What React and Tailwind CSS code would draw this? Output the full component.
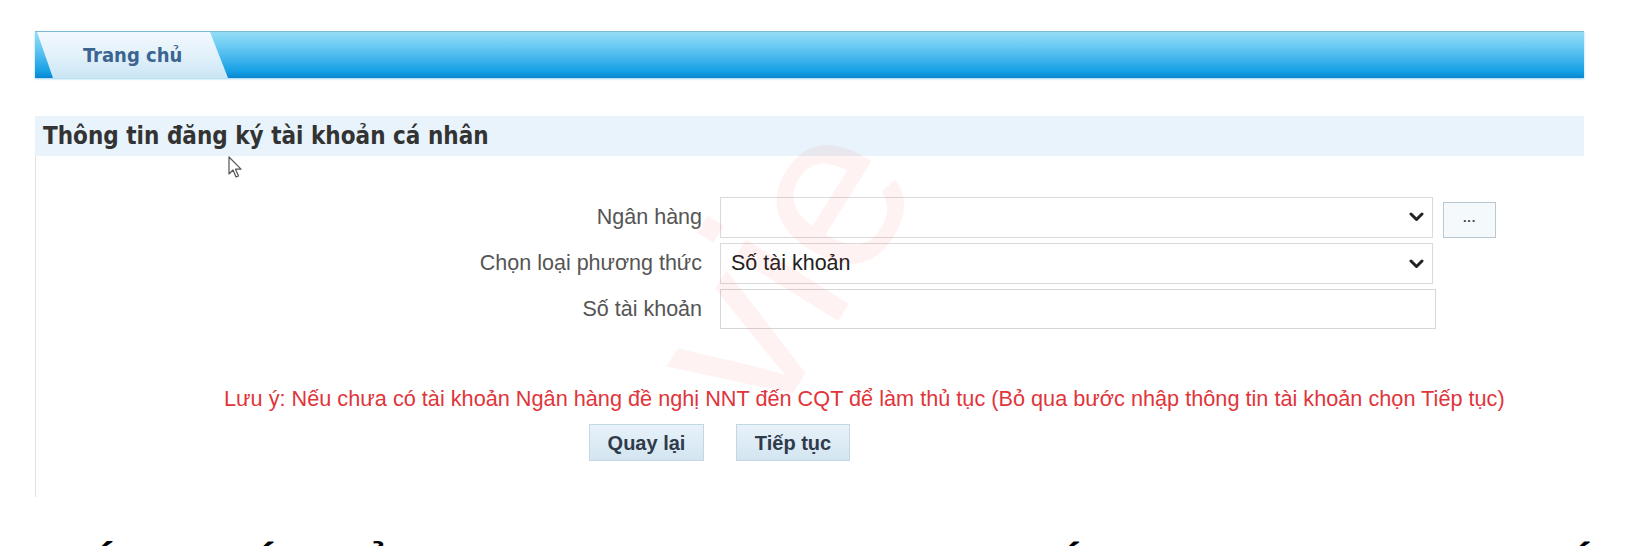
import React from "react";

function Chevron() {
  return (
    <svg width="15" height="10" viewBox="0 0 15 10" className="shrink-0">
      <polyline points="2,2 7.5,7.5 13,2" fill="none" stroke="#222" strokeWidth="3" strokeLinecap="round" strokeLinejoin="round" />
    </svg>
  );
}

function Cursor() {
  return (
    <svg width="15" height="23" viewBox="0 0 15 23" className="absolute left-[228px] top-[156px]">
      <path d="M1 1 L1 18 L5 14 L8 21 L10.5 20 L7.5 13.2 L13 13.2 Z" fill="#fff" stroke="#555" strokeWidth="1.2" strokeLinejoin="round" />
    </svg>
  );
}

export default function App() {
  return (
    <div className="relative w-[1642px] h-[546px] overflow-hidden bg-white font-['Liberation_Sans',Arial,sans-serif]">
      {/* watermark */}
      <div className="pointer-events-none absolute left-[470px] top-[150px] w-[620px] text-center -rotate-[58deg] text-[230px] leading-none text-[#ff1a1a] opacity-[0.05] font-['Liberation_Sans',sans-serif]">
        vie
      </div>

      <div className="pt-[31px] pl-[35px]">
        {/* tab bar */}
        <div className="flex h-[47px] w-[1549px] border-t border-[#7cb8d6] bg-[linear-gradient(to_bottom,#93dcf4_0%,#6ccbf3_30%,#3fb3ec_60%,#15a0e4_85%,#0a86d0_100%)] shadow-[0_1px_2px_rgba(0,140,220,0.4)]">
          <div className="flex h-full w-[193px] items-center pl-[48px] bg-[linear-gradient(to_bottom,#f2f9fd_0%,#e2f1fa_50%,#cbe6f4_100%)] [clip-path:polygon(2px_0,175px_0,193px_100%,18px_100%)]">
            <span className="font-['DejaVu_Sans_Condensed','DejaVu_Sans',sans-serif] font-bold text-[20px] text-[#3b6590]">Trang chủ</span>
          </div>
        </div>

        {/* section header */}
        <div className="mt-[38px] flex h-[40px] w-[1549px] items-center bg-[#e8f3fb] pl-[8px]">
          <span className="font-['DejaVu_Sans_Condensed','DejaVu_Sans',sans-serif] font-bold text-[24px] text-[#333]">Thông tin đăng ký tài khoản cá nhân</span>
        </div>

        {/* content box */}
        <div className="h-[341px] w-[1549px] border-l border-[#e2e2e2] pt-[40px]">
          <div className="flex flex-col gap-[5px]">
            <div className="flex items-center">
              <div className="w-[666px] text-right text-[21.5px] text-[#555]">Ngân hàng</div>
              <div className="ml-[18px] flex h-[41px] w-[713px] items-center justify-end border border-[#dadada] bg-white pr-[8px]">
                <Chevron />
              </div>
              <div className="ml-[10px] mt-[6px] flex h-[36px] w-[53px] items-center justify-center border border-[#b9c8d2] bg-[#f4f9fc] text-[13px] font-bold leading-none text-[#444]">
                ···
              </div>
            </div>
            <div className="flex items-center">
              <div className="w-[666px] text-right text-[21.5px] text-[#555]">Chọn loại phương thức</div>
              <div className="ml-[18px] flex h-[41px] w-[713px] items-center justify-between border border-[#dadada] bg-white pl-[10px] pr-[8px]">
                <span className="text-[21.5px] text-[#222]">Số tài khoản</span>
                <Chevron />
              </div>
            </div>
            <div className="flex items-center">
              <div className="w-[666px] text-right text-[21.5px] text-[#555]">Số tài khoản</div>
              <div className="ml-[18px] h-[40px] w-[716px] border border-[#d6d6d6] bg-white" />
            </div>
          </div>

          <div className="mt-[57px] pl-[188px] text-[21.7px] leading-[26px] text-[#e0353b]">
            Lưu ý: Nếu chưa có tài khoản Ngân hàng đề nghị NNT đến CQT để làm thủ tục (Bỏ qua bước nhập thông tin tài khoản chọn Tiếp tục)
          </div>

          <div className="mt-[12px] flex gap-[32px] pl-[553px]">
            <div className="flex h-[37px] w-[115px] items-center justify-center border border-[#c3d7e5] bg-[linear-gradient(to_bottom,#e8f2f9,#d3e5f1)] text-[20px] font-bold text-[#2f3b4a]">
              Quay lại
            </div>
            <div className="flex h-[37px] w-[114px] items-center justify-center border border-[#c3d7e5] bg-[linear-gradient(to_bottom,#e8f2f9,#d3e5f1)] text-[20px] font-bold text-[#2f3b4a]">
              Tiếp tục
            </div>
          </div>
        </div>
      </div>

      {/* cut-off heading below */}
      <div className="mt-[47px] flex text-[44px] font-bold leading-none text-black">
        <span className="ml-[88px]">Ó</span>
        <span className="ml-[128px]">Á</span>
        <span className="ml-[80px]">Ả</span>
        <span className="ml-[662px]">Á</span>
        <span className="ml-[480px]">Ý</span>
      </div>

      <Cursor />
    </div>
  );
}
